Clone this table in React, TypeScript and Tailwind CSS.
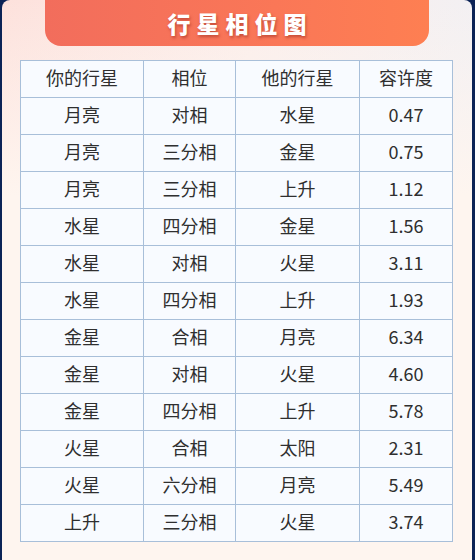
const rows = [
  ['月亮', '对相', '水星', '0.47'],
  ['月亮', '三分相', '金星', '0.75'],
  ['月亮', '三分相', '上升', '1.12'],
  ['水星', '四分相', '金星', '1.56'],
  ['水星', '对相', '火星', '3.11'],
  ['水星', '四分相', '上升', '1.93'],
  ['金星', '合相', '月亮', '6.34'],
  ['金星', '对相', '火星', '4.60'],
  ['金星', '四分相', '上升', '5.78'],
  ['火星', '合相', '太阳', '2.31'],
  ['火星', '六分相', '月亮', '5.49'],
  ['上升', '三分相', '火星', '3.74'],
];

const font = { fontFamily: '"Microsoft YaHei", "Noto Sans CJK SC", sans-serif' };

export default function App() {
  return (
    <div className="w-[475px] h-[560px] bg-[#0b2356] overflow-hidden" style={font}>
      <div className="relative mt-[11px] ml-[2px] w-[470px] h-[560px] rounded-t-[8px] bg-[linear-gradient(100deg,#fde1dc_0%,#fbeeeb_45%,#eff1f6_100%)]">
        <div className="absolute inset-0 rounded-t-[8px] bg-[linear-gradient(180deg,rgba(254,246,240,0)_0%,#fef5ef_35%,#fef5ef_100%)]" />

        {/* 标题 */}
        <div className="relative -mt-[11px] ml-[43px] w-[384px] h-[46px] rounded-b-[16px] bg-[linear-gradient(90deg,#f26d5c,#fa7757_60%,#fe7f52)] flex items-center justify-center">
          <span className="text-white text-[23px] font-black tracking-[6px] pl-[6px] [text-shadow:1px_2px_3px_rgba(150,40,30,0.55)]">
            行星相位图
          </span>
        </div>

        {/* 表格 */}
        <table className="relative mt-[14px] ml-[18px] w-[433px] border-collapse bg-[#f8fbff] text-[#2f2f2f] text-[18px] leading-none">
          <colgroup>
            <col className="w-[123px]" />
            <col className="w-[92px]" />
            <col className="w-[124px]" />
            <col className="w-[93px]" />
          </colgroup>
          <thead>
            <tr className="h-[37px]">
              {['你的行星', '相位', '他的行星', '容许度'].map(h => (
                <th key={h} className="border border-[#a8bfd9] font-normal text-center pb-[4px]">{h}</th>
              ))}
            </tr>
          </thead>
          <tbody>
            {rows.map((r, i) => (
              <tr key={i} className="h-[37px]">
                {r.map((c, j) => (
                  <td key={j} className="border border-[#a8bfd9] text-center pb-[4px]">{c}</td>
                ))}
              </tr>
            ))}
          </tbody>
        </table>
      </div>
    </div>
  );
}
